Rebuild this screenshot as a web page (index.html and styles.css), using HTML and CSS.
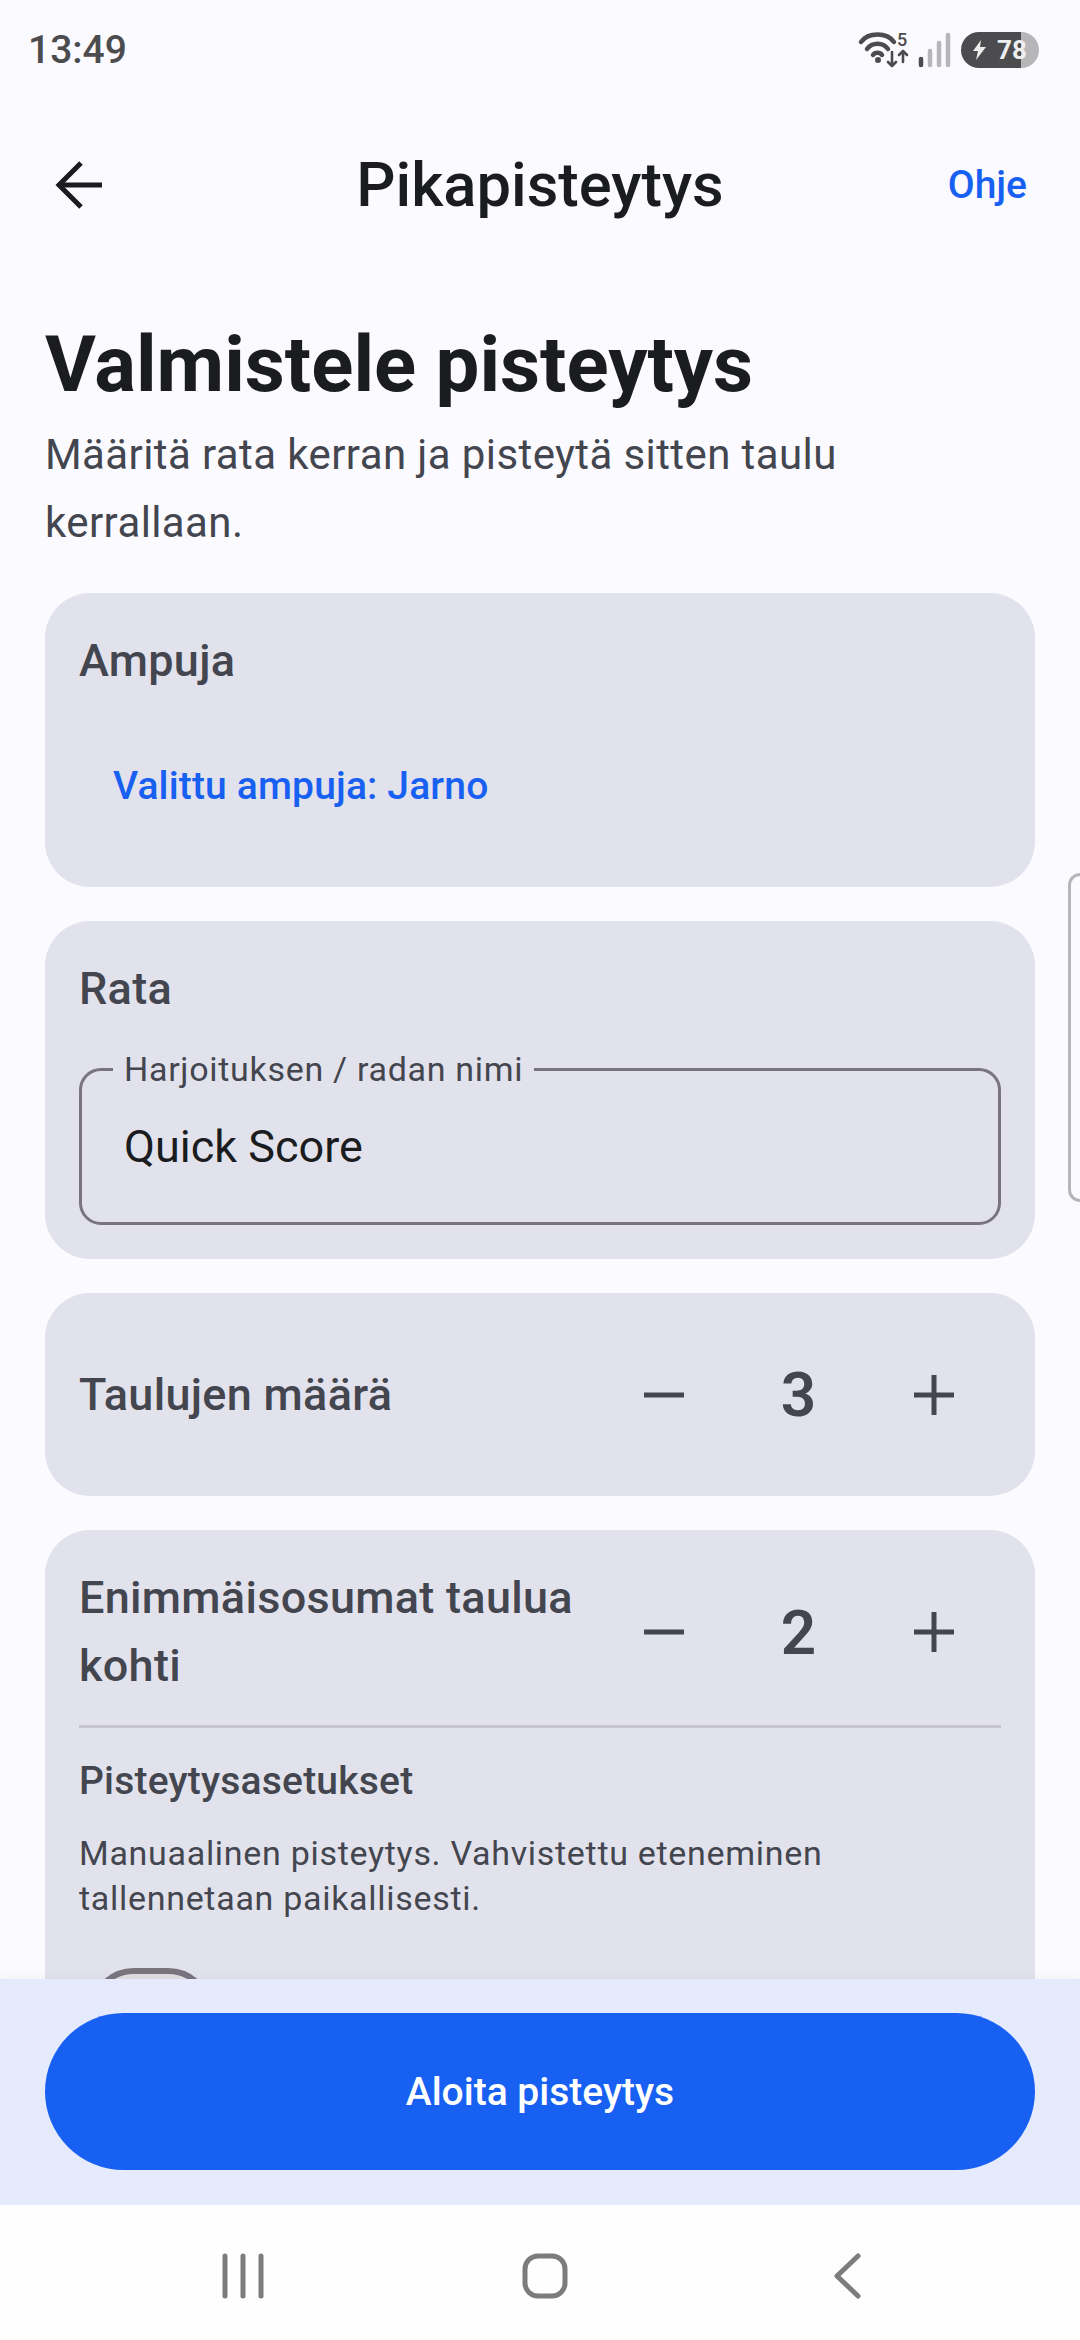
FILE: index.html
```html
<!DOCTYPE html>
<html lang="fi">
<head>
  <meta charset="UTF-8" />
  <meta name="viewport" content="width=device-width, initial-scale=1" />
  <title>Pikapisteytys</title>
  <link rel="stylesheet" href="styles.css">
</head>
<body>

<div class="status-bar">
  <span class="status-time">13:49</span>
  <div class="status-icons">
    <svg class="icon-wifi" width="58" height="42" viewBox="0 0 58 42">
      <g fill="none" stroke="#4c4c4e" stroke-width="4.5" stroke-linecap="round">
        <path d="M6 13 C13 3 32 3 39 13" />
        <path d="M12 20 C17 13 28 13 33 20" />
        <path d="M18 26 C20 23 25 23 27 26" />
      </g>
      <circle cx="23" cy="31" r="3" fill="#4c4c4e" />
      <text x="42" y="17" class="wifi-num">5</text>
      <g fill="none" stroke="#4c4c4e" stroke-width="2.6" stroke-linecap="round" stroke-linejoin="round">
        <path d="M37 23 V37 M33 33 L37 37 L41 33" />
        <path d="M48 33 V22 M44 26 L48 22 L52 26" />
      </g>
    </svg>
    <svg class="icon-signal" width="33" height="36" viewBox="0 0 33 36">
      <g stroke-width="4.5" stroke-linecap="round">
        <path d="M3 27 V33" stroke="#4c4c4e" />
        <path d="M12 19 V33" stroke="#b6b6b8" />
        <path d="M21 11 V33" stroke="#b6b6b8" />
        <path d="M30 3 V33" stroke="#b6b6b8" />
      </g>
    </svg>
    <div class="battery">
      <svg width="15" height="20" viewBox="0 0 15 20"><path d="M9 0 L1 11 H6 L4 20 L14 7 H8 Z" fill="#eee" /></svg>
      <span>78</span>
    </div>
  </div>
</div>

<header class="top-bar">
  <button class="back-btn" aria-label="Takaisin">
    <svg width="48" height="48" viewBox="0 0 48 48" fill="none" stroke="#1a1c20" stroke-width="5">
      <path d="M47 24 H4" />
      <path d="M26 2 L4 24 L26 46" />
    </svg>
  </button>
  <h1 class="top-title">Pikapisteytys</h1>
  <a class="help-link">Ohje</a>
</header>

<main class="content">
  <h2 class="page-title">Valmistele pisteytys</h2>
  <p class="page-sub">Määritä rata kerran ja pisteytä sitten taulu kerrallaan.</p>

  <section class="card">
    <h3 class="card-title">Ampuja</h3>
    <button class="text-btn">Valittu ampuja: Jarno</button>
  </section>

  <section class="card">
    <h3 class="card-title">Rata</h3>
    <div class="field">
      <label class="field-label">Harjoituksen / radan nimi</label>
      <span class="field-value">Quick Score</span>
    </div>
  </section>

  <section class="card">
    <div class="step-row">
      <h3 class="card-title">Taulujen määrä</h3>
      <div class="stepper">
        <button class="step-btn" aria-label="Vähennä">
          <svg width="40" height="40" viewBox="0 0 40 40"><path d="M0 20 H40" stroke="#44464f" stroke-width="5" /></svg>
        </button>
        <span class="step-value">3</span>
        <button class="step-btn" aria-label="Lisää">
          <svg width="40" height="40" viewBox="0 0 40 40"><path d="M0 20 H40 M20 0 V40" stroke="#44464f" stroke-width="5" /></svg>
        </button>
      </div>
    </div>
  </section>

  <section class="card">
    <div class="step-row">
      <h3 class="card-title">Enimmäisosumat taulua kohti</h3>
      <div class="stepper">
        <button class="step-btn" aria-label="Vähennä">
          <svg width="40" height="40" viewBox="0 0 40 40"><path d="M0 20 H40" stroke="#44464f" stroke-width="5" /></svg>
        </button>
        <span class="step-value">2</span>
        <button class="step-btn" aria-label="Lisää">
          <svg width="40" height="40" viewBox="0 0 40 40"><path d="M0 20 H40 M20 0 V40" stroke="#44464f" stroke-width="5" /></svg>
        </button>
      </div>
    </div>
    <hr class="divider" />
    <h4 class="sub-title">Pisteytysasetukset</h4>
    <p class="sub-text">Manuaalinen pisteytys. Vahvistettu eteneminen tallennetaan paikallisesti.</p>
    <div class="switch"></div>
  </section>
</main>

<div class="scroll-tab"></div>

<footer class="action-bar">
  <button class="start-btn">Aloita pisteytys</button>
</footer>

<nav class="nav-bar">
  <svg width="44" height="46" viewBox="0 0 44 46" stroke="#7c7c7c" stroke-width="5" stroke-linecap="round" fill="none">
    <path d="M4 3 V43 M22 3 V43 M40 3 V43" />
  </svg>
  <svg width="46" height="46" viewBox="0 0 46 46" fill="none">
    <rect x="3" y="3" width="40" height="40" rx="13" stroke="#7c7c7c" stroke-width="5" />
  </svg>
  <svg width="28" height="46" viewBox="0 0 28 46" stroke="#7c7c7c" stroke-width="5" stroke-linecap="round" stroke-linejoin="round" fill="none">
    <path d="M25 3 L4 23 L25 43" />
  </svg>
</nav>

</body>
</html>
```

FILE: styles.css
```css
* {
  box-sizing: border-box;
}
html, body {
  margin: 0;
  height: 100%;
}
body {
  width: 1080px;
  height: 2340px;
  display: flex;
  flex-direction: column;
  position: relative;
  overflow: hidden;
  font-family: Roboto, 'Noto Sans', sans-serif;
  background: #fbfaff;
  color: #1a1c20;
}
button {
  font-family: inherit;
  background: none;
  border: none;
  padding: 0;
}

/* status bar */
.status-bar {
  height: 100px;
  flex: none;
  display: flex;
  justify-content: space-between;
  align-items: center;
  padding: 0 41px 0 28px;
}
.status-time {
  font-size: 39px;
  font-weight: 500;
  color: #4c4c4e;
}
.status-icons {
  display: flex;
  align-items: center;
  gap: 5px;
}
.wifi-num {
  font-family: Roboto, sans-serif;
  font-size: 18px;
  font-weight: 500;
  fill: #4c4c4e;
}
.battery {
  width: 78px;
  height: 36px;
  margin-left: 5px;
  border-radius: 18px;
  background: linear-gradient(90deg, #4c4c4e 77%, #b6b6b8 77%);
  display: flex;
  align-items: center;
  gap: 10px;
  padding-left: 11px;
  color: #eee;
  font-size: 26px;
  font-weight: 700;
}

/* top bar */
.top-bar {
  height: 130px;
  margin-top: 20px;
  flex: none;
  display: grid;
  grid-template-columns: 158px 1fr 158px;
  align-items: center;
}
.back-btn {
  display: flex;
  padding-left: 55px;
}
.top-title {
  margin: 0;
  text-align: center;
  font-size: 61.5px;
  font-weight: 500;
  color: #1a1c20;
}
.help-link {
  text-align: right;
  padding-right: 53px;
  font-size: 39px;
  font-weight: 500;
  color: #1760f2;
}

/* scrolling content */
.content {
  flex: 1;
  min-height: 0;
  overflow: hidden;
  padding: 59px 45px 0;
  display: flex;
  flex-direction: column;
  gap: 34px;
}
.page-title {
  margin: 0;
  font-size: 78px;
  line-height: 112px;
  font-weight: 700;
  color: #1a1c20;
}
.page-sub {
  margin: -34px 0 2px;
  font-size: 42px;
  line-height: 68px;
  letter-spacing: 0.4px;
  color: #44464f;
}
.card {
  flex: none;
  background: #e2e2ec;
  border-radius: 45px;
  padding: 34px;
}
.card-title {
  margin: 0;
  font-size: 45px;
  line-height: 68px;
  font-weight: 500;
  letter-spacing: 0.3px;
  color: #44464f;
}
.text-btn {
  display: block;
  height: 135px;
  margin-top: 23px;
  padding: 0 34px;
  font-size: 39px;
  font-weight: 500;
  letter-spacing: 0.15px;
  color: #1760f2;
}
.field {
  position: relative;
  margin-top: 45px;
  height: 157px;
  border: 3px solid #79747e;
  border-radius: 22px;
  display: flex;
  align-items: center;
  padding: 0 42px;
}
.field-label {
  position: absolute;
  left: 31px;
  top: -22px;
  padding: 0 11px;
  background: #e2e2ec;
  font-size: 34px;
  line-height: 40px;
  letter-spacing: 0.7px;
  color: #44464f;
}
.field-value {
  font-size: 45px;
  color: #1a1c20;
}
.step-row {
  display: flex;
  align-items: center;
  min-height: 135px;
}
.step-row .card-title {
  flex: 1;
  padding-right: 20px;
}
.stepper {
  flex: none;
  display: grid;
  grid-template-columns: repeat(3, 135px);
  align-items: center;
  justify-items: center;
}
.step-btn {
  display: flex;
}
.step-value {
  font-size: 62px;
  font-weight: 600;
  color: #44464f;
}
.divider {
  border: none;
  height: 3px;
  margin: 25px 0 0;
  background: #c6c5cf;
}
.sub-title {
  margin: 25px 0 0;
  font-size: 39px;
  line-height: 56px;
  font-weight: 500;
  letter-spacing: 0.2px;
  color: #44464f;
}
.sub-text {
  margin: 22px 0 0;
  font-size: 34px;
  line-height: 45px;
  letter-spacing: 0.7px;
  color: #44464f;
}
.switch {
  width: 124px;
  height: 90px;
  margin-top: 47px;
  margin-left: 10px;
  border: 6px solid #79747e;
  border-radius: 45px;
  background: #e2dde2;
}

/* peek of the side panel handle */
.scroll-tab {
  position: absolute;
  top: 873px;
  right: -14px;
  width: 26px;
  height: 329px;
  border: 3px solid #b6b6b8;
  border-radius: 12px;
}

/* bottom */
.action-bar {
  flex: none;
  height: 226px;
  padding: 34px 45px 0;
  background: #e6eafd;
  position: relative;
  box-shadow: 0 -3px 10px rgba(0, 0, 0, 0.03);
}
.start-btn {
  display: block;
  width: 100%;
  height: 157px;
  border-radius: 79px;
  background: #1760f2;
  color: #fff;
  font-size: 39px;
  font-weight: 500;
}
.nav-bar {
  flex: none;
  height: 135px;
  background: #fefefe;
  display: grid;
  grid-template-columns: repeat(3, 302px);
  justify-content: center;
  align-items: center;
  justify-items: center;
  padding: 7px 0 0 10px;
}
```
